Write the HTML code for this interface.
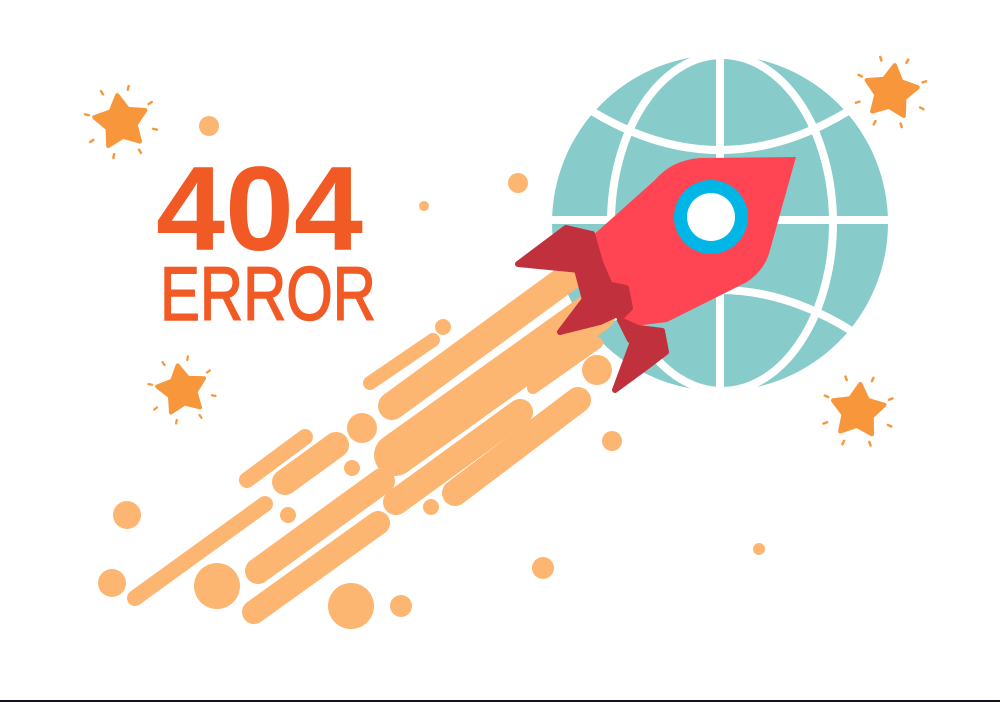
<!DOCTYPE html>
<html><head><meta charset="utf-8"><style>
html,body{margin:0;padding:0;background:#fff;width:1000px;height:702px;overflow:hidden}
svg{display:block}
</style></head><body>
<svg width="1000" height="702" viewBox="0 0 1000 702" xmlns="http://www.w3.org/2000/svg">
<defs>
<g id="star">
<polygon points="0,-1 0.32,-0.44 0.951,-0.309 0.52,0.17 0.588,0.809 0,0.55 -0.588,0.809 -0.52,0.17 -0.951,-0.309 -0.32,-0.44" fill="#F7963A" stroke="#F7963A" stroke-width="0.16" stroke-linejoin="round"/>
<g stroke="#F7963A" stroke-width="0.09" stroke-linecap="round">
<line x1="0" y1="-1.22" x2="0" y2="-1.36" transform="rotate(20)"/>
<line x1="0" y1="-1.22" x2="0" y2="-1.36" transform="rotate(65)"/>
<line x1="0" y1="-1.22" x2="0" y2="-1.36" transform="rotate(110)"/>
<line x1="0" y1="-1.22" x2="0" y2="-1.36" transform="rotate(155)"/>
<line x1="0" y1="-1.22" x2="0" y2="-1.36" transform="rotate(200)"/>
<line x1="0" y1="-1.22" x2="0" y2="-1.36" transform="rotate(245)"/>
<line x1="0" y1="-1.22" x2="0" y2="-1.36" transform="rotate(290)"/>
<line x1="0" y1="-1.22" x2="0" y2="-1.36" transform="rotate(335)"/>
</g>
</g>
</defs>

<use href="#star" transform="translate(121,122) scale(27) rotate(-8)"/>
<use href="#star" transform="translate(891,92) scale(27) rotate(8)"/>
<use href="#star" transform="translate(182,390) scale(25) rotate(-10)"/>
<use href="#star" transform="translate(858,411) scale(27) rotate(5)"/>

<!-- globe -->
<circle cx="720" cy="223" r="168" fill="#87CCCB"/>
<g fill="none" stroke="#fff" stroke-width="8">
<line x1="720" y1="50" x2="720" y2="400"/>
<line x1="545" y1="220" x2="895" y2="220"/>
<ellipse cx="722" cy="223" rx="111" ry="168"/>
<path d="M590,110 Q720,190 850,110"/>
<path d="M590,330 Q720,250 850,330"/>
</g>

<!-- flames -->
<g stroke="#FDB572" stroke-linecap="round" fill="none">
<line x1="370" y1="383" x2="433" y2="340" stroke-width="14"/>
<line x1="392" y1="406" x2="585" y2="265" stroke-width="28"/>
<line x1="395" y1="455" x2="595" y2="312" stroke-width="42"/>
<line x1="533" y1="388" x2="597" y2="343" stroke-width="12"/>
<line x1="396" y1="502" x2="520" y2="412" stroke-width="26"/>
<line x1="455" y1="493" x2="578" y2="400" stroke-width="26"/>
<line x1="247" y1="480" x2="305" y2="437" stroke-width="16"/>
<line x1="285" y1="482" x2="336" y2="445" stroke-width="26"/>
<line x1="135" y1="598" x2="265" y2="504" stroke-width="16"/>
<line x1="258" y1="571" x2="382" y2="481" stroke-width="26"/>
<line x1="254" y1="612" x2="378" y2="523" stroke-width="24"/>
</g>
<g fill="#FDB572">
<circle cx="209" cy="126" r="10"/>
<circle cx="518" cy="183" r="10"/>
<circle cx="424" cy="206" r="5"/>
<circle cx="443" cy="327" r="8"/>
<circle cx="362" cy="428" r="15"/>
<circle cx="352" cy="468" r="8"/>
<circle cx="127" cy="515" r="14"/>
<circle cx="288" cy="515" r="8"/>
<circle cx="431" cy="507" r="8"/>
<circle cx="112" cy="583" r="14"/>
<circle cx="217" cy="586" r="23"/>
<circle cx="351" cy="606" r="23"/>
<circle cx="401" cy="606" r="11"/>
<circle cx="543" cy="568" r="11"/>
<circle cx="597" cy="370" r="15"/>
<circle cx="612" cy="441" r="10"/>
<circle cx="759" cy="549" r="6"/>
</g>

<!-- rocket -->
<g fill="#C0313D" stroke="#C0313D" stroke-width="6" stroke-linejoin="round">
<polygon points="518,264 566,228 592,234 600,262 580,270"/>
<polygon points="560,332 598,282 626,288 630,308 600,322"/>
<polygon points="615,390 638,328 662,331 666,352 645,368"/>
</g>
<path d="M796,157 L700,158 Q672,160 655,180 L590,238 L583,273 L627,327 L667,322 L747,282 Q765,270 770,250 Z" fill="#FF4453"/>
<g fill="#C0313D" stroke="#C0313D" stroke-width="6" stroke-linejoin="round">
<polygon points="575,262 592,234 600,262 612,290 585,300"/>
<polygon points="598,282 626,288 630,308 620,318 605,300"/>
<polygon points="620,320 638,328 662,331 650,345 630,340"/>
</g>
<circle cx="711" cy="217" r="37" fill="#00B6E6"/>
<circle cx="711" cy="217" r="24" fill="#fff"/>

<!-- text -->
<text x="156" y="250" font-family="Liberation Sans, sans-serif" font-weight="bold" font-size="120" fill="#F15A24" textLength="207" lengthAdjust="spacingAndGlyphs">404</text>
<text x="160" y="320" font-family="Liberation Sans, sans-serif" font-size="76" fill="#F15A24" stroke="#F15A24" stroke-width="1.5" textLength="216" lengthAdjust="spacingAndGlyphs">ERROR</text>

<rect x="0" y="700" width="1000" height="2" fill="#14141f"/>
</svg>
</body></html>
